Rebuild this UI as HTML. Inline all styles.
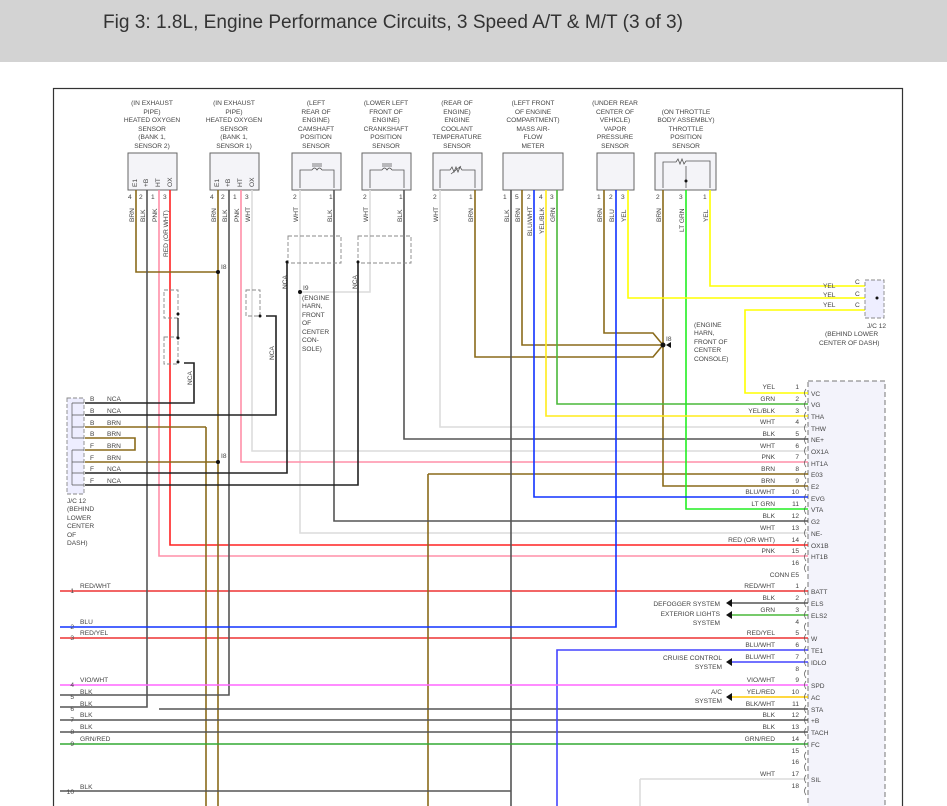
<!DOCTYPE html>
<html><head><meta charset="utf-8"><style>
html,body{margin:0;padding:0;background:#fff;width:947px;height:806px;overflow:hidden}
svg{display:block}
text{font-family:"Liberation Sans",sans-serif;font-size:6.6px;fill:#444}
.t{font-size:19px;fill:#333}
.w{fill:none;stroke-width:1.6}
</style></head><body>
<svg width="947" height="806" viewBox="0 0 947 806">
<rect x="0" y="0" width="947" height="62" fill="#d3d3d3"/>
<text class="t" x="103" y="28" textLength="580" lengthAdjust="spacingAndGlyphs">Fig 3: 1.8L, Engine Performance Circuits, 3 Speed A/T &amp; M/T (3 of 3)</text>
<rect x="53.5" y="88.5" width="849" height="730" fill="#fff" stroke="#333" stroke-width="1.2"/>

<!-- ECU box -->
<rect x="808" y="381" width="77" height="430" fill="#f3f3fb" stroke="#777" stroke-dasharray="5,3"/>

<!-- sensor labels -->
<g text-anchor="middle">
<text x="152" y="105">(IN EXHAUST</text><text x="152" y="114">PIPE)</text><text x="152" y="122">HEATED OXYGEN</text><text x="152" y="131">SENSOR</text><text x="152" y="139">(BANK 1,</text><text x="152" y="148">SENSOR 2)</text>
<text x="234" y="105">(IN EXHAUST</text><text x="234" y="114">PIPE)</text><text x="234" y="122">HEATED OXYGEN</text><text x="234" y="131">SENSOR</text><text x="234" y="139">(BANK 1,</text><text x="234" y="148">SENSOR 1)</text>
<text x="316" y="105">(LEFT</text><text x="316" y="114">REAR OF</text><text x="316" y="122">ENGINE)</text><text x="316" y="131">CAMSHAFT</text><text x="316" y="139">POSITION</text><text x="316" y="148">SENSOR</text>
<text x="386" y="105">(LOWER LEFT</text><text x="386" y="114">FRONT OF</text><text x="386" y="122">ENGINE)</text><text x="386" y="131">CRANKSHAFT</text><text x="386" y="139">POSITION</text><text x="386" y="148">SENSOR</text>
<text x="457" y="105">(REAR OF</text><text x="457" y="114">ENGINE)</text><text x="457" y="122">ENGINE</text><text x="457" y="131">COOLANT</text><text x="457" y="139">TEMPERATURE</text><text x="457" y="148">SENSOR</text>
<text x="533" y="105">(LEFT FRONT</text><text x="533" y="114">OF ENGINE</text><text x="533" y="122">COMPARTMENT)</text><text x="533" y="131">MASS AIR-</text><text x="533" y="139">FLOW</text><text x="533" y="148">METER</text>
<text x="615" y="105">(UNDER REAR</text><text x="615" y="114">CENTER OF</text><text x="615" y="122">VEHICLE)</text><text x="615" y="131">VAPOR</text><text x="615" y="139">PRESSURE</text><text x="615" y="148">SENSOR</text>
<text x="686" y="114">(ON THROTTLE</text><text x="686" y="122">BODY ASSEMBLY)</text><text x="686" y="131">THROTTLE</text><text x="686" y="139">POSITION</text><text x="686" y="148">SENSOR</text>
</g>
<!-- sensor boxes -->
<g fill="#f4f4f8" stroke="#666">
<rect x="128" y="153" width="49" height="37"/><rect x="210" y="153" width="49" height="37"/>
<rect x="292" y="153" width="49" height="37"/><rect x="362" y="153" width="49" height="37"/>
<rect x="433" y="153" width="49" height="37"/><rect x="503" y="153" width="60" height="37"/>
<rect x="597" y="153" width="37" height="37"/><rect x="655" y="153" width="61" height="37"/>
</g>
<g fill="none" stroke="#555" stroke-width="0.8">
<path d="M300 188V170H312M322 170H334V188M312 170q2.5-4 5 0q2.5-4 5 0M312 164H322M312 166H322"/>
<path d="M370 188V170H382M392 170H404V188M382 170q2.5-4 5 0q2.5-4 5 0M382 164H392M382 166H392"/>
<path d="M440 188V170H450l2-3 2 5 2-5 2 5 2-5 2 3H475V188M451 174l10-8"/>
<path d="M663 188V162H676l2-3 2 5 2-5 2 5 2-3H710V188M686 166V188"/>
</g>
<circle cx="686" cy="181" r="1.5" fill="#111"/>
<!-- pin labels in boxes -->
<g font-size="6">
<text transform="translate(137,187) rotate(-90)">E1</text><text transform="translate(148,187) rotate(-90)">+B</text><text transform="translate(160,187) rotate(-90)">HT</text><text transform="translate(172,187) rotate(-90)">OX</text>
<text transform="translate(219,187) rotate(-90)">E1</text><text transform="translate(230,187) rotate(-90)">+B</text><text transform="translate(242,187) rotate(-90)">HT</text><text transform="translate(254,187) rotate(-90)">OX</text>
</g>
<g font-size="6">
<text x="128" y="199">4</text><text x="139" y="199">2</text><text x="151" y="199">1</text><text x="163" y="199">3</text>
<text x="210" y="199">4</text><text x="221" y="199">2</text><text x="233" y="199">1</text><text x="245" y="199">3</text>
<text x="293" y="199">2</text><text x="329" y="199">1</text><text x="363" y="199">2</text><text x="399" y="199">1</text>
<text x="433" y="199">2</text><text x="469" y="199">1</text>
<text x="503" y="199">1</text><text x="515" y="199">5</text><text x="527" y="199">2</text><text x="539" y="199">4</text><text x="550" y="199">3</text>
<text x="597" y="199">1</text><text x="609" y="199">2</text><text x="621" y="199">3</text>
<text x="656" y="199">2</text><text x="679" y="199">3</text><text x="703" y="199">1</text>
</g>
<!-- vertical wire labels -->
<g font-size="6.3">
<text transform="translate(134,222) rotate(-90)">BRN</text><text transform="translate(145,222) rotate(-90)">BLK</text><text transform="translate(157,222) rotate(-90)">PNK</text><text transform="translate(168,257) rotate(-90)">RED (OR WHT)</text>
<text transform="translate(216,222) rotate(-90)">BRN</text><text transform="translate(227,222) rotate(-90)">BLK</text><text transform="translate(239,222) rotate(-90)">PNK</text><text transform="translate(250,222) rotate(-90)">WHT</text>
<text transform="translate(298,222) rotate(-90)">WHT</text><text transform="translate(332,222) rotate(-90)">BLK</text>
<text transform="translate(368,222) rotate(-90)">WHT</text><text transform="translate(402,222) rotate(-90)">BLK</text>
<text transform="translate(438,222) rotate(-90)">WHT</text><text transform="translate(473,222) rotate(-90)">BRN</text>
<text transform="translate(509,222) rotate(-90)">BLK</text><text transform="translate(520,222) rotate(-90)">BRN</text><text transform="translate(532,236) rotate(-90)">BLU/WHT</text><text transform="translate(544,234) rotate(-90)">YEL/BLK</text><text transform="translate(555,222) rotate(-90)">GRN</text>
<text transform="translate(602,222) rotate(-90)">BRN</text><text transform="translate(614,222) rotate(-90)">BLU</text><text transform="translate(626,222) rotate(-90)">YEL</text>
<text transform="translate(661,222) rotate(-90)">BRN</text><text transform="translate(684,232) rotate(-90)">LT GRN</text><text transform="translate(708,222) rotate(-90)">YEL</text>
<text transform="translate(287,289) rotate(-90)">NCA</text><text transform="translate(357,289) rotate(-90)">NCA</text>
<text transform="translate(192,385) rotate(-90)">NCA</text><text transform="translate(274,360) rotate(-90)">NCA</text>
</g>

<!-- wires -->
<g class="w">
<!-- gray/white -->
<path stroke="#dcdcdc" d="M252 190V451H808M300 190V533H808M370 190V292H300M440 190V427H808M640 779H808M640 779V806"/>
<!-- pink -->
<path stroke="#ff8fa8" d="M241 190V462H808M159 190V556H808"/>
<!-- red -->
<path stroke="#f22" d="M170 190V545H808"/>
<path stroke="#e33" d="M60 591H808M60 638H808"/>
<!-- brown -->
<path stroke="#8a6a1a" d="M136 190V272H218M218 190V806M206 427V806M85 427H206M85 438H135V450H85M85 462H218M475 190V357H653L663 345M522 190V345H663M604 190V333H653L663 345M663 190V486H808M428 474H808M428 474V806"/>
<!-- black / dark gray -->
<path stroke="#555" d="M147 190V707H60M229 190V695H60M334 190V521H808M404 190V439H808M511 190V806M159 709H808M60 720H808M60 732H808M60 791H511"/>
<path stroke="#222" d="M85 403H194V363H184M85 415H276V316H266M85 473H287V262M85 485H358V262"/>
<!-- green -->
<path stroke="#4ab83a" d="M557 190V404H808M728 615H808"/>
<path stroke="#3a3" d="M60 744H808"/>
<path stroke="#2e2" d="M686 190V509H808"/>
<!-- yellow -->
<path stroke="#ffeb1a" d="M546 190V416H808"/>
<path stroke="#ff0" d="M628 190V298H868M710 190V286H868M868 310H745V393H808"/>
<path stroke="#fc0" d="M728 697H808"/>
<!-- blue -->
<path stroke="#13f" d="M534 190V497H808M616 190V627H60"/>
<path stroke="#44f" d="M557 806V650H808M728 662H808"/>
<!-- violet -->
<path stroke="#f6f" d="M60 685H808"/>
<path stroke="#555" d="M728 603H808"/>
</g>
<!-- arrows -->
<g fill="#111">
<path d="M726 603l6-4v8z"/><path d="M726 615l6-4v8z"/><path d="M726 662l6-4v8z"/><path d="M726 697l6-4v8z"/>
<path d="M666 345l5-3v6z"/>
</g>
<!-- dashed connectors -->
<g fill="none" stroke="#888" stroke-dasharray="4,2" stroke-width="0.9">
<rect x="164" y="290" width="14" height="28"/><rect x="164" y="337" width="14" height="27"/>
<rect x="246" y="290" width="14" height="26"/>
<rect x="288" y="236" width="53" height="27"/><rect x="358" y="236" width="53" height="27"/>
<rect x="67" y="398" width="17" height="96" fill="#eef"/>
<rect x="865" y="280" width="19" height="38" fill="#eef"/>
</g>
<path d="M178 318V337" stroke="#111" stroke-width="1.2"/>
<g fill="#111">
<circle cx="218" cy="272" r="2"/><circle cx="218" cy="462" r="2"/><circle cx="300" cy="292" r="2"/>
<circle cx="663" cy="345" r="2.5"/><circle cx="287" cy="262" r="1.5"/><circle cx="358" cy="262" r="1.5"/>
<circle cx="178" cy="314" r="1.5"/><circle cx="178" cy="338" r="1.5"/><circle cx="178" cy="362" r="1.5"/><circle cx="260" cy="316" r="1.5"/>
<circle cx="877" cy="298" r="1.5"/>
</g>
<text x="221" y="269">I8</text><text x="221" y="458">I8</text><text x="666" y="341">I8</text><text x="303" y="290">I9</text>
<g font-size="6.3">
<text x="302" y="300">(ENGINE</text><text x="302" y="308">HARN,</text><text x="302" y="317">FRONT</text><text x="302" y="325">OF</text><text x="302" y="334">CENTER</text><text x="302" y="342">CON-</text><text x="302" y="351">SOLE)</text>
<text x="694" y="327">(ENGINE</text><text x="694" y="335">HARN,</text><text x="694" y="344">FRONT OF</text><text x="694" y="352">CENTER</text><text x="694" y="361">CONSOLE)</text>
<text x="867" y="328">J/C 12</text><text x="825" y="336">(BEHIND LOWER</text><text x="819" y="345">CENTER OF DASH)</text>
<text x="823" y="288">YEL</text><text x="823" y="297">YEL</text><text x="823" y="307">YEL</text>
<text x="855" y="284">C</text><text x="855" y="296">C</text><text x="855" y="307">C</text>
<text x="67" y="503">J/C 12</text><text x="67" y="511">(BEHIND</text><text x="67" y="520">LOWER</text><text x="67" y="528">CENTER</text><text x="67" y="537">OF</text><text x="67" y="545">DASH)</text>
<text x="90" y="401">B</text><text x="107" y="401">NCA</text><text x="90" y="413">B</text><text x="107" y="413">NCA</text>
<text x="90" y="425">B</text><text x="107" y="425">BRN</text><text x="90" y="436">B</text><text x="107" y="436">BRN</text>
<text x="90" y="448">F</text><text x="107" y="448">BRN</text><text x="90" y="460">F</text><text x="107" y="460">BRN</text>
<text x="90" y="471">F</text><text x="107" y="471">NCA</text><text x="90" y="483">F</text><text x="107" y="483">NCA</text>
</g>
<!-- ECU pin rows -->
<g font-size="6.3" text-anchor="end">
<text x="775" y="389">YEL</text><text x="799" y="389">1</text>
<text x="775" y="401">GRN</text><text x="799" y="401">2</text>
<text x="775" y="413">YEL/BLK</text><text x="799" y="413">3</text>
<text x="775" y="424">WHT</text><text x="799" y="424">4</text>
<text x="775" y="436">BLK</text><text x="799" y="436">5</text>
<text x="775" y="448">WHT</text><text x="799" y="448">6</text>
<text x="775" y="459">PNK</text><text x="799" y="459">7</text>
<text x="775" y="471">BRN</text><text x="799" y="471">8</text>
<text x="775" y="483">BRN</text><text x="799" y="483">9</text>
<text x="775" y="494">BLU/WHT</text><text x="799" y="494">10</text>
<text x="775" y="506">LT GRN</text><text x="799" y="506">11</text>
<text x="775" y="518">BLK</text><text x="799" y="518">12</text>
<text x="775" y="530">WHT</text><text x="799" y="530">13</text>
<text x="775" y="542">RED (OR WHT)</text><text x="799" y="542">14</text>
<text x="775" y="553">PNK</text><text x="799" y="553">15</text>
<text x="799" y="565">16</text>
<text x="799" y="577">CONN E5</text>
<text x="775" y="588">RED/WHT</text><text x="799" y="588">1</text>
<text x="775" y="600">BLK</text><text x="799" y="600">2</text>
<text x="775" y="612">GRN</text><text x="799" y="612">3</text>
<text x="799" y="624">4</text>
<text x="775" y="635">RED/YEL</text><text x="799" y="635">5</text>
<text x="775" y="647">BLU/WHT</text><text x="799" y="647">6</text>
<text x="775" y="659">BLU/WHT</text><text x="799" y="659">7</text>
<text x="799" y="671">8</text>
<text x="775" y="682">VIO/WHT</text><text x="799" y="682">9</text>
<text x="775" y="694">YEL/RED</text><text x="799" y="694">10</text>
<text x="775" y="706">BLK/WHT</text><text x="799" y="706">11</text>
<text x="775" y="717">BLK</text><text x="799" y="717">12</text>
<text x="775" y="729">BLK</text><text x="799" y="729">13</text>
<text x="775" y="741">GRN/RED</text><text x="799" y="741">14</text>
<text x="799" y="753">15</text><text x="799" y="764">16</text>
<text x="775" y="776">WHT</text><text x="799" y="776">17</text><text x="799" y="788">18</text>
<text x="720" y="606">DEFOGGER SYSTEM</text><text x="720" y="616">EXTERIOR LIGHTS</text><text x="720" y="625">SYSTEM</text>
<text x="722" y="660">CRUISE CONTROL</text><text x="722" y="669">SYSTEM</text>
<text x="722" y="694">A/C</text><text x="722" y="703">SYSTEM</text>
<text x="74" y="593">1</text><text x="74" y="629">2</text><text x="74" y="640">3</text><text x="74" y="687">4</text>
<text x="74" y="699">5</text><text x="74" y="711">6</text><text x="74" y="722">7</text><text x="74" y="734">8</text><text x="74" y="746">9</text><text x="74" y="794">10</text>
</g>
<g font-size="6.3">
<text x="80" y="588">RED/WHT</text><text x="80" y="624">BLU</text><text x="80" y="635">RED/YEL</text><text x="80" y="682">VIO/WHT</text>
<text x="80" y="694">BLK</text><text x="80" y="706">BLK</text><text x="80" y="717">BLK</text><text x="80" y="729">BLK</text><text x="80" y="741">GRN/RED</text><text x="80" y="789">BLK</text>
<text x="811" y="396">VC</text><text x="811" y="407">VG</text><text x="811" y="419">THA</text><text x="811" y="431">THW</text><text x="811" y="442">NE+</text>
<text x="811" y="454">OX1A</text><text x="811" y="466">HT1A</text><text x="811" y="477">E03</text><text x="811" y="489">E2</text><text x="811" y="501">EVG</text>
<text x="811" y="512">VTA</text><text x="811" y="524">G2</text><text x="811" y="536">NE-</text><text x="811" y="548">OX1B</text><text x="811" y="559">HT1B</text>
<text x="811" y="594">BATT</text><text x="811" y="606">ELS</text><text x="811" y="618">ELS2</text><text x="811" y="641">W</text><text x="811" y="653">TE1</text>
<text x="811" y="665">IDLO</text><text x="811" y="688">SPD</text><text x="811" y="700">AC</text><text x="811" y="712">STA</text><text x="811" y="723">+B</text>
<text x="811" y="735">TACH</text><text x="811" y="747">FC</text><text x="811" y="782">SIL</text>
</g>
<!-- connector brackets -->
<g fill="none" stroke="#555" stroke-width="0.7">
<path d="M806 389q-3 4 0 8M806 401q-3 4 0 8M806 412q-3 4 0 8M806 424q-3 4 0 8M806 436q-3 4 0 8M806 447q-3 4 0 8M806 459q-3 4 0 8M806 471q-3 4 0 8M806 482q-3 4 0 8M806 494q-3 4 0 8M806 506q-3 4 0 8M806 517q-3 4 0 8M806 529q-3 4 0 8M806 541q-3 4 0 8M806 553q-3 4 0 8M806 564q-3 4 0 8"/>
<path d="M806 587q-3 4 0 8M806 599q-3 4 0 8M806 611q-3 4 0 8M806 623q-3 4 0 8M806 634q-3 4 0 8M806 646q-3 4 0 8M806 658q-3 4 0 8M806 670q-3 4 0 8M806 681q-3 4 0 8M806 693q-3 4 0 8M806 705q-3 4 0 8M806 716q-3 4 0 8M806 728q-3 4 0 8M806 740q-3 4 0 8M806 752q-3 4 0 8M806 763q-3 4 0 8M806 775q-3 4 0 8M806 787q-3 4 0 8"/>
<path d="M72 403H84M72 415H84M72 427H84M72 438H84M72 450H84M72 462H84M72 473H84M72 485H84M72 403V438M72 450V485"/>
</g>
</svg>
</body></html>
